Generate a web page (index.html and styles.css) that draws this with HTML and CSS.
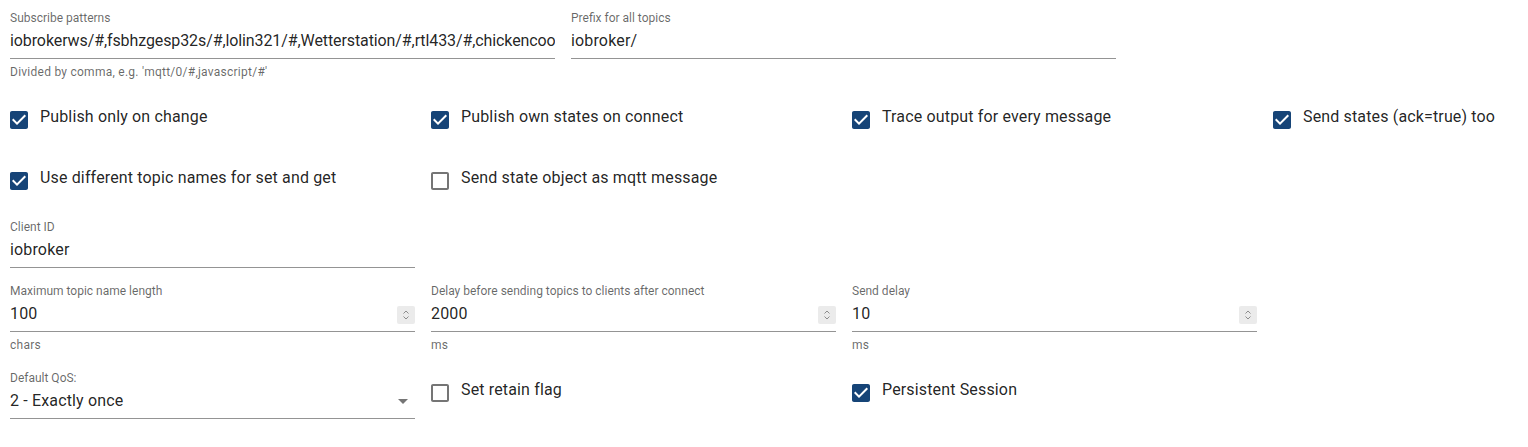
FILE: index.html
```html
<!DOCTYPE html>
<html lang="en">
<head>
<meta charset="utf-8">
<title>MQTT settings</title>
<link rel="stylesheet" href="styles.css">
</head>
<body>
<div class="page">

  <div class="row row-top">
    <div class="field wide">
      <label class="flabel">Subscribe patterns</label>
      <div class="control"><span class="value tight">iobrokerws/#,fsbhzgesp32s/#,lolin321/#,Wetterstation/#,rtl433/#,chickencoop/#,garden/#</span></div>
      <div class="helper">Divided by comma, e.g. 'mqtt/0/#,javascript/#'</div>
    </div>
    <div class="field wide">
      <label class="flabel">Prefix for all topics</label>
      <div class="control"><span class="value">iobroker/</span></div>
    </div>
  </div>

  <div class="row cb-row cb-row-1">
    <div class="cb-col"><div class="cb">
      <svg class="box checked" viewBox="0 0 24 24"><path d="M19 3H5c-1.11 0-2 .9-2 2v14c0 1.1.89 2 2 2h14c1.11 0 2-.9 2-2V5c0-1.1-.89-2-2-2zm-9 14l-5-5 1.41-1.41L10 14.17l7.59-7.59L19 8l-9 9z"/></svg>
      <span class="cb-label">Publish only on change</span>
    </div></div>
    <div class="cb-col"><div class="cb">
      <svg class="box checked" viewBox="0 0 24 24"><path d="M19 3H5c-1.11 0-2 .9-2 2v14c0 1.1.89 2 2 2h14c1.11 0 2-.9 2-2V5c0-1.1-.89-2-2-2zm-9 14l-5-5 1.41-1.41L10 14.17l7.59-7.59L19 8l-9 9z"/></svg>
      <span class="cb-label">Publish own states on connect</span>
    </div></div>
    <div class="cb-col"><div class="cb">
      <svg class="box checked" viewBox="0 0 24 24"><path d="M19 3H5c-1.11 0-2 .9-2 2v14c0 1.1.89 2 2 2h14c1.11 0 2-.9 2-2V5c0-1.1-.89-2-2-2zm-9 14l-5-5 1.41-1.41L10 14.17l7.59-7.59L19 8l-9 9z"/></svg>
      <span class="cb-label">Trace output for every message</span>
    </div></div>
    <div class="cb-col"><div class="cb">
      <svg class="box checked" viewBox="0 0 24 24"><path d="M19 3H5c-1.11 0-2 .9-2 2v14c0 1.1.89 2 2 2h14c1.11 0 2-.9 2-2V5c0-1.1-.89-2-2-2zm-9 14l-5-5 1.41-1.41L10 14.17l7.59-7.59L19 8l-9 9z"/></svg>
      <span class="cb-label">Send states (ack=true) too</span>
    </div></div>
  </div>

  <div class="row cb-row cb-row-2">
    <div class="cb-col"><div class="cb">
      <svg class="box checked" viewBox="0 0 24 24"><path d="M19 3H5c-1.11 0-2 .9-2 2v14c0 1.1.89 2 2 2h14c1.11 0 2-.9 2-2V5c0-1.1-.89-2-2-2zm-9 14l-5-5 1.41-1.41L10 14.17l7.59-7.59L19 8l-9 9z"/></svg>
      <span class="cb-label">Use different topic names for set and get</span>
    </div></div>
    <div class="cb-col"><div class="cb">
      <svg class="box unchecked" viewBox="0 0 24 24"><path d="M19 5v14H5V5h14m0-2H5c-1.1 0-2 .9-2 2v14c0 1.1.9 2 2 2h14c1.1 0 2-.9 2-2V5c0-1.1-.9-2-2-2z"/></svg>
      <span class="cb-label">Send state object as mqtt message</span>
    </div></div>
  </div>

  <div class="row row-client">
    <div class="field col">
      <label class="flabel">Client ID</label>
      <div class="control"><span class="value">iobroker</span></div>
    </div>
  </div>

  <div class="row row-numbers">
    <div class="field col">
      <label class="flabel">Maximum topic name length</label>
      <div class="control"><span class="value">100</span>
        <svg class="spin" viewBox="0 0 18 18"><rect width="18" height="18" rx="2"/><path d="M6.5 7.5L9 5l2.5 2.5M6.5 10.5L9 13l2.5-2.5"/></svg>
      </div>
      <div class="helper">chars</div>
    </div>
    <div class="field col">
      <label class="flabel">Delay before sending topics to clients after connect</label>
      <div class="control"><span class="value">2000</span>
        <svg class="spin" viewBox="0 0 18 18"><rect width="18" height="18" rx="2"/><path d="M6.5 7.5L9 5l2.5 2.5M6.5 10.5L9 13l2.5-2.5"/></svg>
      </div>
      <div class="helper">ms</div>
    </div>
    <div class="field col">
      <label class="flabel">Send delay</label>
      <div class="control"><span class="value">10</span>
        <svg class="spin" viewBox="0 0 18 18"><rect width="18" height="18" rx="2"/><path d="M6.5 7.5L9 5l2.5 2.5M6.5 10.5L9 13l2.5-2.5"/></svg>
      </div>
      <div class="helper">ms</div>
    </div>
  </div>

  <div class="row row-last">
    <div class="field col">
      <label class="flabel">Default QoS:</label>
      <div class="control"><span class="value">2 - Exactly once</span>
        <svg class="arrow" viewBox="0 0 24 24"><path d="M7 10l5 5 5-5z"/></svg>
      </div>
    </div>
    <div class="cb-col cb-inline"><div class="cb">
      <svg class="box unchecked" viewBox="0 0 24 24"><path d="M19 5v14H5V5h14m0-2H5c-1.1 0-2 .9-2 2v14c0 1.1.9 2 2 2h14c1.1 0 2-.9 2-2V5c0-1.1-.9-2-2-2z"/></svg>
      <span class="cb-label">Set retain flag</span>
    </div></div>
    <div class="cb-col cb-inline"><div class="cb">
      <svg class="box checked" viewBox="0 0 24 24"><path d="M19 3H5c-1.11 0-2 .9-2 2v14c0 1.1.89 2 2 2h14c1.11 0 2-.9 2-2V5c0-1.1-.89-2-2-2zm-9 14l-5-5 1.41-1.41L10 14.17l7.59-7.59L19 8l-9 9z"/></svg>
      <span class="cb-label">Persistent Session</span>
    </div></div>
  </div>

</div>
</body>
</html>
```

FILE: styles.css
```css
html, body {
  margin: 0;
  padding: 0;
  background: #ffffff;
}

body {
  font-family: Roboto, "Liberation Sans", Arial, sans-serif;
  color: rgba(0, 0, 0, 0.87);
  width: 1528px;
  height: 447px;
  overflow: hidden;
}

.page {
  padding-left: 10px;
}

.row {
  display: flex;
  gap: 16px;
  align-items: flex-start;
}

.row-top {
  padding-top: 10px;
  height: 72px;
}

.field {
  position: relative;
  padding-top: 16px;
  flex: none;
}

.field.wide {
  width: 545px;
}

.field.col {
  width: 405px;
}

.flabel {
  position: absolute;
  top: 0;
  left: 0;
  font-size: 12px;
  line-height: 17px;
  color: rgba(0, 0, 0, 0.6);
  white-space: nowrap;
}

.control {
  position: relative;
  box-sizing: border-box;
  height: 33px;
  padding-top: 3px;
  border-bottom: 1px solid rgba(0, 0, 0, 0.42);
  font-size: 16px;
  line-height: 23px;
  letter-spacing: 0.15px;
  white-space: nowrap;
  overflow: hidden;
}

.value {
  display: block;
  overflow: hidden;
}

.value.tight {
  letter-spacing: -0.1px;
}

.helper {
  margin-top: 3px;
  font-size: 12px;
  line-height: 20px;
  letter-spacing: 0.25px;
  color: rgba(0, 0, 0, 0.6);
}

.spin {
  position: absolute;
  right: 0;
  top: 7px;
  width: 18px;
  height: 18px;
}

.spin rect {
  fill: #ebebeb;
}

.spin path {
  fill: none;
  stroke: #8c8c8c;
  stroke-width: 1;
}

.arrow {
  position: absolute;
  right: 0;
  top: 3px;
  width: 24px;
  height: 24px;
  fill: rgba(0, 0, 0, 0.54);
}

.cb-row {
  height: 24px;
  gap: 0;
}

.cb-row-1 {
  margin-top: 22px;
}

.cb-row-2 {
  margin-top: 37px;
}

.cb-col {
  width: 421px;
  flex: none;
}

.cb {
  display: flex;
  align-items: flex-start;
  font-size: 16px;
  line-height: 24px;
  letter-spacing: 0.15px;
}

.box {
  width: 24px;
  height: 24px;
  margin-left: -3px;
  margin-top: 3.5px;
  flex: none;
}

.box.checked {
  fill: #164477;
}

.box.unchecked {
  fill: rgba(0, 0, 0, 0.54);
}

.cb-label {
  margin-left: 9px;
  padding-top: 1px;
  color: rgba(0, 0, 0, 0.87);
  white-space: nowrap;
}

.row-client {
  margin-top: 30px;
}

.row-numbers {
  margin-top: 15px;
}

.row-last {
  margin-top: 15px;
  gap: 0;
}

.row-last .field.col {
  margin-right: 16px;
}

.cb-inline {
  margin-top: 7px;
}
```
